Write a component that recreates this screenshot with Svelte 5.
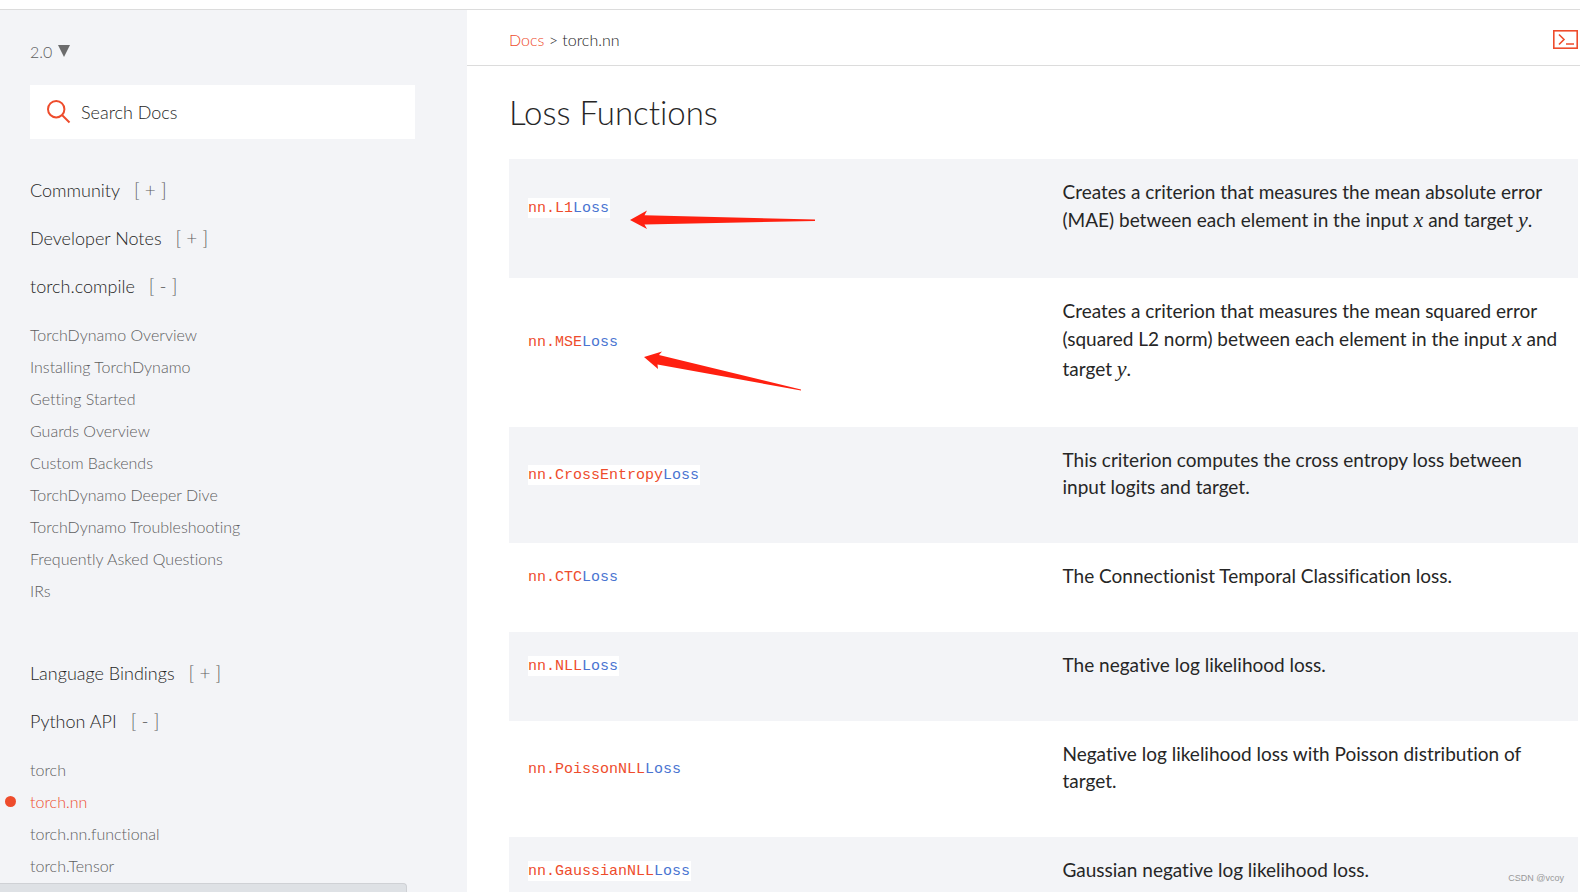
<script lang="ts">
	const compileLinks = [
		'TorchDynamo Overview',
		'Installing TorchDynamo',
		'Getting Started',
		'Guards Overview',
		'Custom Backends',
		'TorchDynamo Deeper Dive',
		'TorchDynamo Troubleshooting',
		'Frequently Asked Questions',
		'IRs'
	];
	const apiLinks = ['torch', 'torch.nn', 'torch.nn.functional', 'torch.Tensor'];

	const menu = [
		{ title: 'Community', links: [] },
		{ title: 'Developer Notes', links: [] },
		{ title: 'torch.compile', links: compileLinks },
		{ title: 'Language Bindings', links: [] },
		{ title: 'Python API', links: apiLinks }
	];
	const current = 'torch.nn';

	// text between $ signs is set as a math variable
	const losses = [
		{
			name: 'L1',
			arrow: 'flat',
			text: 'Creates a criterion that measures the mean absolute error (MAE) between each element in the input $x$ and target $y$.'
		},
		{
			name: 'MSE',
			arrow: 'tilted',
			text: 'Creates a criterion that measures the mean squared error (squared L2 norm) between each element in the input $x$ and target $y$.'
		},
		{
			name: 'CrossEntropy',
			text: 'This criterion computes the cross entropy loss between input logits and target.'
		},
		{ name: 'CTC', text: 'The Connectionist Temporal Classification loss.' },
		{ name: 'NLL', text: 'The negative log likelihood loss.' },
		{
			name: 'PoissonNLL',
			text: 'Negative log likelihood loss with Poisson distribution of target.'
		},
		{ name: 'GaussianNLL', text: 'Gaussian negative log likelihood loss.' }
	];
</script>

<div class="page">
	<div class="topline"></div>
	<div class="columns">
		<nav class="sidebar">
			<a class="version" href="#versions">2.0 <span class="triangle"></span></a>
			<form class="search">
				<svg viewBox="0 0 24 24" width="24" height="24" aria-hidden="true">
					<circle cx="9.2" cy="9.2" r="8.2" />
					<path d="M15 15L22.5 22.5" />
				</svg>
				<input type="text" placeholder="Search Docs" aria-label="Search Docs" />
			</form>
			{#each menu as section}
				<button class="caption">
					{section.title}<span class="toggle">[ {section.links.length ? '-' : '+'} ]</span>
				</button>
				{#if section.links.length}
					<ul>
						{#each section.links as link}
							<li class:current={link === current}><a href="#{link}">{link}</a></li>
						{/each}
					</ul>
				{/if}
			{/each}
		</nav>

		<main>
			<header>
				<div class="crumbs"><a href="#docs">Docs</a> &gt; torch.nn</div>
				<a class="shortcuts" href="#shortcuts" aria-label="Shortcuts">
					<svg viewBox="0 0 25 19" width="25" height="19">
						<rect x="0.8" y="0.8" width="23.4" height="17.4" />
						<path d="M6 4.5L11 9.5L6 14.5M13 14H21" />
					</svg>
				</a>
			</header>
			<article>
				<h2>Loss Functions</h2>
				<table>
					<tbody>
						{#each losses as loss}
							<tr>
								<td class="name">
									<a href="#nn.{loss.name}Loss"><code>nn.{loss.name}<mark>Loss</mark></code></a>
									{#if loss.arrow === 'flat'}
										<svg class="arrow flat" viewBox="0 0 186 20" width="186" height="20">
											<path d="M0 10L17 0.5L14.5 5.2L185 9.5V11L14.5 14.5L17 19Z" />
										</svg>
									{:else if loss.arrow === 'tilted'}
										<svg class="arrow tilted" viewBox="0 0 158 40" width="158" height="40">
											<path d="M0 6L18 0.5L15 4L157 38.5V39.5L13.5 13.5L14 18Z" />
										</svg>
									{/if}
								</td>
								<td class="text">
									<p>
										{#each loss.text.split('$') as part, i}
											{#if i % 2}<i>{part}</i>{:else}{part}{/if}
										{/each}
									</p>
								</td>
							</tr>
						{/each}
					</tbody>
				</table>
			</article>
		</main>
	</div>
	<div class="status"></div>
	<div class="watermark">CSDN @vcoy</div>
</div>

<style>
	:global(body) {
		margin: 0;
		background: #fff;
	}
	.page {
		height: 100vh;
		display: flex;
		flex-direction: column;
		overflow: hidden;
		position: relative;
		font-family: Lato, sans-serif;
		font-weight: 300;
		font-variant-ligatures: none;
		color: #262626;
	}
	a {
		color: inherit;
		text-decoration: none;
	}
	.topline {
		flex: none;
		height: 9px;
		border-bottom: 1px solid #dcdcdc;
	}
	.columns {
		flex: 1;
		min-height: 0;
		display: flex;
	}

	.sidebar {
		box-sizing: border-box;
		width: 467px;
		flex: none;
		padding: 25px 52px 0 30px;
		background: #f3f4f7;
		overflow: hidden;
	}
	.version {
		display: flex;
		align-items: center;
		gap: 6px;
		height: 32px;
		font-size: 16px;
		color: #5e5e5f;
	}
	.triangle {
		border: 6px solid transparent;
		border-top: 12px solid #6c6c6d;
		border-bottom: 0;
	}
	.search {
		display: flex;
		align-items: center;
		gap: 10px;
		height: 54px;
		margin: 18px 0 26px;
		padding-left: 17px;
		background: #fff;
	}
	.search svg {
		fill: none;
		stroke: #ee4c2c;
		stroke-width: 2;
	}
	.search input {
		flex: 1;
		min-width: 0;
		padding: 0;
		border: 0;
		outline: 0;
		font: inherit;
		font-size: 18px;
		color: #262626;
	}
	.search input::placeholder {
		color: #262626;
		opacity: 1;
	}
	.caption {
		display: block;
		height: 48px;
		padding: 0;
		border: 0;
		background: none;
		font: inherit;
		font-size: 18px;
		color: #262626;
	}
	.toggle {
		margin-left: 14px;
		font-size: 19px;
		color: #5e5e5f;
	}
	ul {
		list-style: none;
		margin: 9px 0 42px;
		padding: 0;
	}
	li {
		display: flex;
		align-items: center;
		height: 32px;
		font-size: 16px;
		color: #5e5e5f;
	}
	.current {
		color: #ee4c2c;
	}
	.current::before {
		content: '';
		width: 11px;
		height: 11px;
		margin: 0 14px 0 -25px;
		border-radius: 50%;
		background: #ee4c2c;
	}

	main {
		flex: 1;
		min-width: 0;
	}
	header {
		box-sizing: border-box;
		display: flex;
		align-items: center;
		justify-content: space-between;
		height: 56px;
		padding: 4px 2px 0 42px;
		border-bottom: 1px solid #dcdcdc;
		font-size: 16px;
	}
	header a {
		color: #ee4c2c;
	}
	.shortcuts {
		display: flex;
	}
	.shortcuts svg {
		fill: none;
		stroke: #ee4c2c;
		stroke-width: 1.6;
	}
	article {
		padding: 0 2px 0 42px;
	}
	h2 {
		margin: 0;
		padding: 26px 0 27px;
		font-size: 33px;
		line-height: 40px;
		font-weight: 300;
	}
	table {
		width: 100%;
		table-layout: fixed;
		border-collapse: collapse;
	}
	tr:nth-child(odd) {
		background: #f3f4f7;
	}
	.name {
		position: relative;
		padding: 19px 19px 40px;
		vertical-align: middle;
	}
	.name a {
		display: flex;
	}
	code {
		padding: 2px 1px 0 0;
		background: #fff;
		font: 15px/18px 'Liberation Mono', monospace;
		color: #ee4c2c;
	}
	mark {
		background: none;
		color: #4974d1;
	}
	.text {
		padding: 19px 14px 43px 19px;
		vertical-align: top;
	}
	p {
		margin: 0;
		font-size: 19px;
		line-height: 27px;
		font-weight: 400;
	}
	i {
		font: italic 22px/30px 'Liberation Serif', serif;
	}
	.arrow {
		position: absolute;
		fill: #ff2010;
	}
	.flat {
		left: 121px;
		top: 51px;
	}
	.tilted {
		left: 135px;
		top: 73px;
	}

	.status {
		position: absolute;
		left: 0;
		bottom: 0;
		width: 406px;
		height: 8px;
		border: 1px solid #cfd1d5;
		border-width: 1px 1px 0 0;
		border-radius: 0 4px 0 0;
		background: #dee1e5;
	}
	.watermark {
		position: absolute;
		right: 16px;
		bottom: 7px;
		font: 9px/14px 'Liberation Sans', sans-serif;
		color: #999;
	}
</style>
